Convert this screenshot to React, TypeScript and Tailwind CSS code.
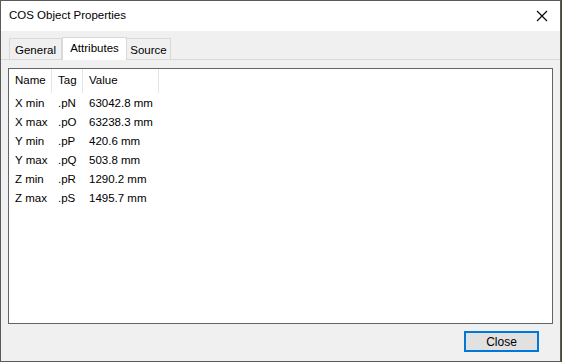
import React from "react";

const ROWS = [
  { name: "X min", tag: ".pN", value: "63042.8 mm" },
  { name: "X max", tag: ".pO", value: "63238.3 mm" },
  { name: "Y min", tag: ".pP", value: "420.6 mm" },
  { name: "Y max", tag: ".pQ", value: "503.8 mm" },
  { name: "Z min", tag: ".pR", value: "1290.2 mm" },
  { name: "Z max", tag: ".pS", value: "1495.7 mm" },
];

export default function App() {
  return (
    <div className="w-[562px] h-[362px] bg-[#4a4a30] flex" style={{ fontFamily: "'Segoe UI', 'Liberation Sans', Arial, sans-serif" }}>
      <div className="w-[561px] h-[362px] border border-[#5a5a5a] bg-[#f0f0f0] flex flex-col text-[11.5px] text-black">
        {/* Title bar */}
        <div className="h-[30px] bg-white flex items-center justify-between pl-[8px] pr-[6px] shrink-0">
          <span className="text-[11.5px]">COS Object Properties</span>
          <svg width="12" height="12" viewBox="0 0 12 12" className="mr-[6px]">
            <path d="M1 1 L11 11 M11 1 L1 11" stroke="#000" strokeWidth="1.1" />
          </svg>
        </div>

        {/* Tabs */}
        <div className="flex items-end px-[8px] pt-[6px] h-[29px] border-b border-[#d9d9d9] shrink-0">
          <div className="h-[21px] w-[53px] pt-[3px] flex items-center justify-center border border-b-0 border-[#d9d9d9] bg-[#f0f0f0]">General</div>
          <div className="h-[23px] w-[65px] pb-[1px] flex items-center justify-center border border-b-0 border-[#d9d9d9] bg-white -mb-px relative">Attributes</div>
          <div className="h-[21px] w-[44px] pt-[3px] flex items-center justify-center border border-l-0 border-b-0 border-[#d9d9d9] bg-[#f0f0f0]">Source</div>
        </div>

        {/* List */}
        <div className="mx-[7px] mt-[8px] h-[256px] border border-[#646464] bg-white shrink-0">
          <div className="flex h-[24px]">
            <div className="w-[43px] pl-[6px] flex items-center border-r border-[#e5e5e5]">Name</div>
            <div className="w-[31px] pl-[6px] flex items-center border-r border-[#e5e5e5]">Tag</div>
            <div className="w-[76px] pl-[6px] flex items-center border-r border-[#e5e5e5]">Value</div>
          </div>
          <div className="pt-[1px]">
            {ROWS.map((r) => (
              <div key={r.name} className="flex h-[19px] items-center">
                <div className="w-[43px] pl-[6px]">{r.name}</div>
                <div className="w-[31px] pl-[6px]">{r.tag}</div>
                <div className="w-[76px] pl-[6px]">{r.value}</div>
              </div>
            ))}
          </div>
        </div>

        {/* Footer */}
        <div className="flex justify-end pr-[21px] pt-[7px]">
          <button className="w-[75px] h-[21px] border-2 border-[#0078d7] bg-[#e1e1e1] flex items-center justify-center text-[12px]">
            Close
          </button>
        </div>
      </div>
    </div>
  );
}
